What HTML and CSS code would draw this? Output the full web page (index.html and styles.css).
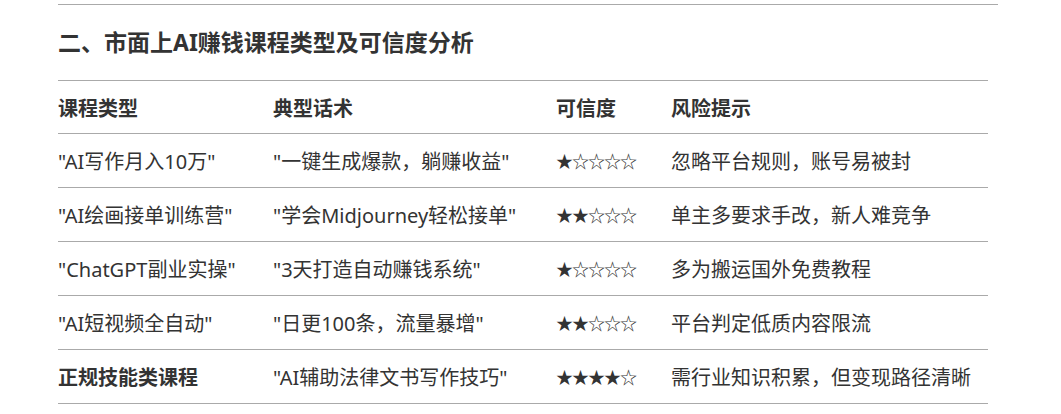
FILE: index.html
```html
<!DOCTYPE html>
<html lang="zh">
<head>
<meta charset="utf-8">
<link rel="stylesheet" href="styles.css">
</head>
<body>
<div class="page">
  <div class="rule"></div>
  <h2 class="title">二、市面上AI赚钱课程类型及可信度分析</h2>
  <table class="tbl">
    <colgroup>
      <col class="c1"><col class="c2"><col class="c3"><col class="c4">
    </colgroup>
    <thead>
      <tr><th>课程类型</th><th>典型话术</th><th>可信度</th><th>风险提示</th></tr>
    </thead>
    <tbody>
      <tr><td>"AI写作月入10万"</td><td>"一键生成爆款，躺赚收益"</td><td><span class="stars">★☆☆☆☆</span></td><td>忽略平台规则，账号易被封</td></tr>
      <tr><td>"AI绘画接单训练营"</td><td>"学会Midjourney轻松接单"</td><td><span class="stars">★★☆☆☆</span></td><td>单主多要求手改，新人难竞争</td></tr>
      <tr><td>"ChatGPT副业实操"</td><td>"3天打造自动赚钱系统"</td><td><span class="stars">★☆☆☆☆</span></td><td>多为搬运国外免费教程</td></tr>
      <tr><td>"AI短视频全自动"</td><td>"日更100条，流量暴增"</td><td><span class="stars">★★☆☆☆</span></td><td>平台判定低质内容限流</td></tr>
      <tr><td class="strong">正规技能类课程</td><td>"AI辅助法律文书写作技巧"</td><td><span class="stars">★★★★☆</span></td><td>需行业知识积累，但变现路径清晰</td></tr>
    </tbody>
  </table>
</div>
</body>
</html>
```

FILE: styles.css
```css
html, body {
  margin: 0;
  padding: 0;
  background: #ffffff;
}
body {
  font-family: "Noto Sans", "Noto Sans CJK SC", sans-serif;
  color: #333333;
}
.page {
  width: 940px;
  padding: 4px 0 0 58px;
}
.rule {
  border-top: 1px solid #aaaaaa;
}
.title {
  margin: 0;
  height: 75px;
  display: flex;
  align-items: center;
  font-size: 23px;
  font-weight: 700;
  color: #333333;
  line-height: 1;
}
.tbl {
  width: 930px;
  border-collapse: collapse;
  border-top: 1px solid #aaaaaa;
  table-layout: fixed;
  font-size: 20px;
}
.c1 { width: 215px; }
.c2 { width: 283px; }
.c3 { width: 115px; }
.c4 { width: 317px; }
.tbl th, .tbl td {
  text-align: left;
  padding: 0;
  height: 53px;
  border-bottom: 1px solid #aaaaaa;
  vertical-align: middle;
  white-space: nowrap;
}
.tbl th {
  font-weight: 700;
  height: 52px;
}
.tbl td.strong {
  font-weight: 700;
}
.stars {
  font-family: "Noto Sans CJK SC", sans-serif;
  font-size: 17px;
  letter-spacing: -1px;
}
```
